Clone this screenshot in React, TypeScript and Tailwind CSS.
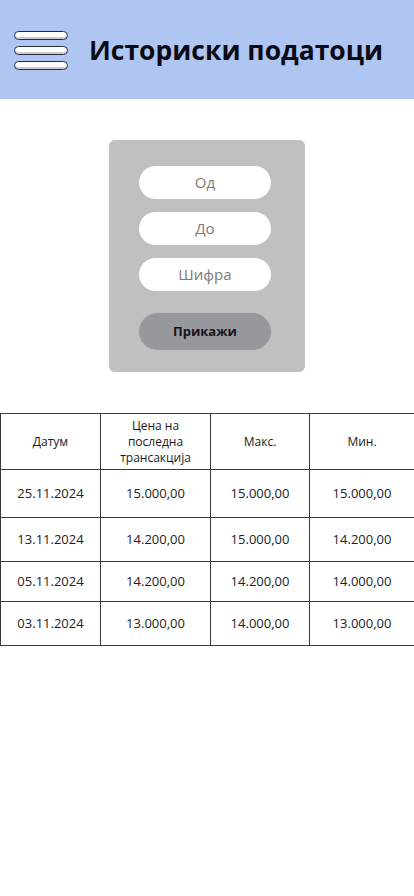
const rows = [
  ["25.11.2024", "15.000,00", "15.000,00", "15.000,00"],
  ["13.11.2024", "14.200,00", "15.000,00", "14.200,00"],
  ["05.11.2024", "14.200,00", "14.200,00", "14.000,00"],
  ["03.11.2024", "13.000,00", "14.000,00", "13.000,00"],
];

const rowHeights = ["h-[48px]", "h-[44px]", "h-[40px]", "h-[44px]"];

function Burger() {
  return (
    <div className="flex w-[54px] flex-col gap-[6px]">
      {[0, 1, 2].map((i) => (
        <div
          key={i}
          className="h-[9px] rounded-full border-[1.5px] border-[#2a2a35] bg-white shadow-[inset_0_-2px_0_#c9ccd6]"
        />
      ))}
    </div>
  );
}

export default function App() {
  return (
    <div className="min-h-[896px] bg-white font-['Open_Sans',sans-serif]">
      <header className="flex h-[99px] items-center gap-[21px] bg-[#afc6f2] pl-[14px] pt-[1px]">
        <Burger />
        <h1 className="text-[26.5px] font-bold leading-none text-[#0a0a14]">
          Историски податоци
        </h1>
      </header>

      <div className="flex justify-center pt-[41px]">
        <div className="flex w-[196px] flex-col items-center rounded-[6px] bg-[#c0c0c0] pt-[26px] pb-[22px] pr-[4px]">
          {["Од", "До", "Шифра"].map((p) => (
            <div
              key={p}
              className="mb-[13px] flex h-[33px] w-[132px] items-center justify-center rounded-full bg-white text-[15px] text-[#7b7b7b]"
            >
              {p}
            </div>
          ))}
          <button className="mt-[9px] flex h-[37px] w-[132px] items-center justify-center rounded-full bg-[#97989d] text-[13px] font-bold text-[#15151a]">
            Прикажи
          </button>
        </div>
      </div>

      <table className="mt-[41px] w-[414px] table-fixed border-collapse text-center text-[#1a1a1a]">
        <colgroup>
          <col className="w-[100px]" />
          <col className="w-[110px]" />
          <col className="w-[99px]" />
          <col className="w-[105px]" />
        </colgroup>
        <thead>
          <tr className="h-[56px] text-[12px] leading-[16px]">
            <th className="border border-[#3a3a3a] font-normal">Датум</th>
            <th className="border border-[#3a3a3a] font-normal">
              Цена на
              <br />
              последна
              <br />
              трансакција
            </th>
            <th className="border border-[#3a3a3a] font-normal">Макс.</th>
            <th className="border border-[#3a3a3a] font-normal">Мин.</th>
          </tr>
        </thead>
        <tbody className="text-[13px] text-[#222]">
          {rows.map((r, i) => (
            <tr key={i} className={rowHeights[i]}>
              {r.map((c, j) => (
                <td key={j} className="border border-[#3a3a3a]">
                  {c}
                </td>
              ))}
            </tr>
          ))}
        </tbody>
      </table>
    </div>
  );
}
